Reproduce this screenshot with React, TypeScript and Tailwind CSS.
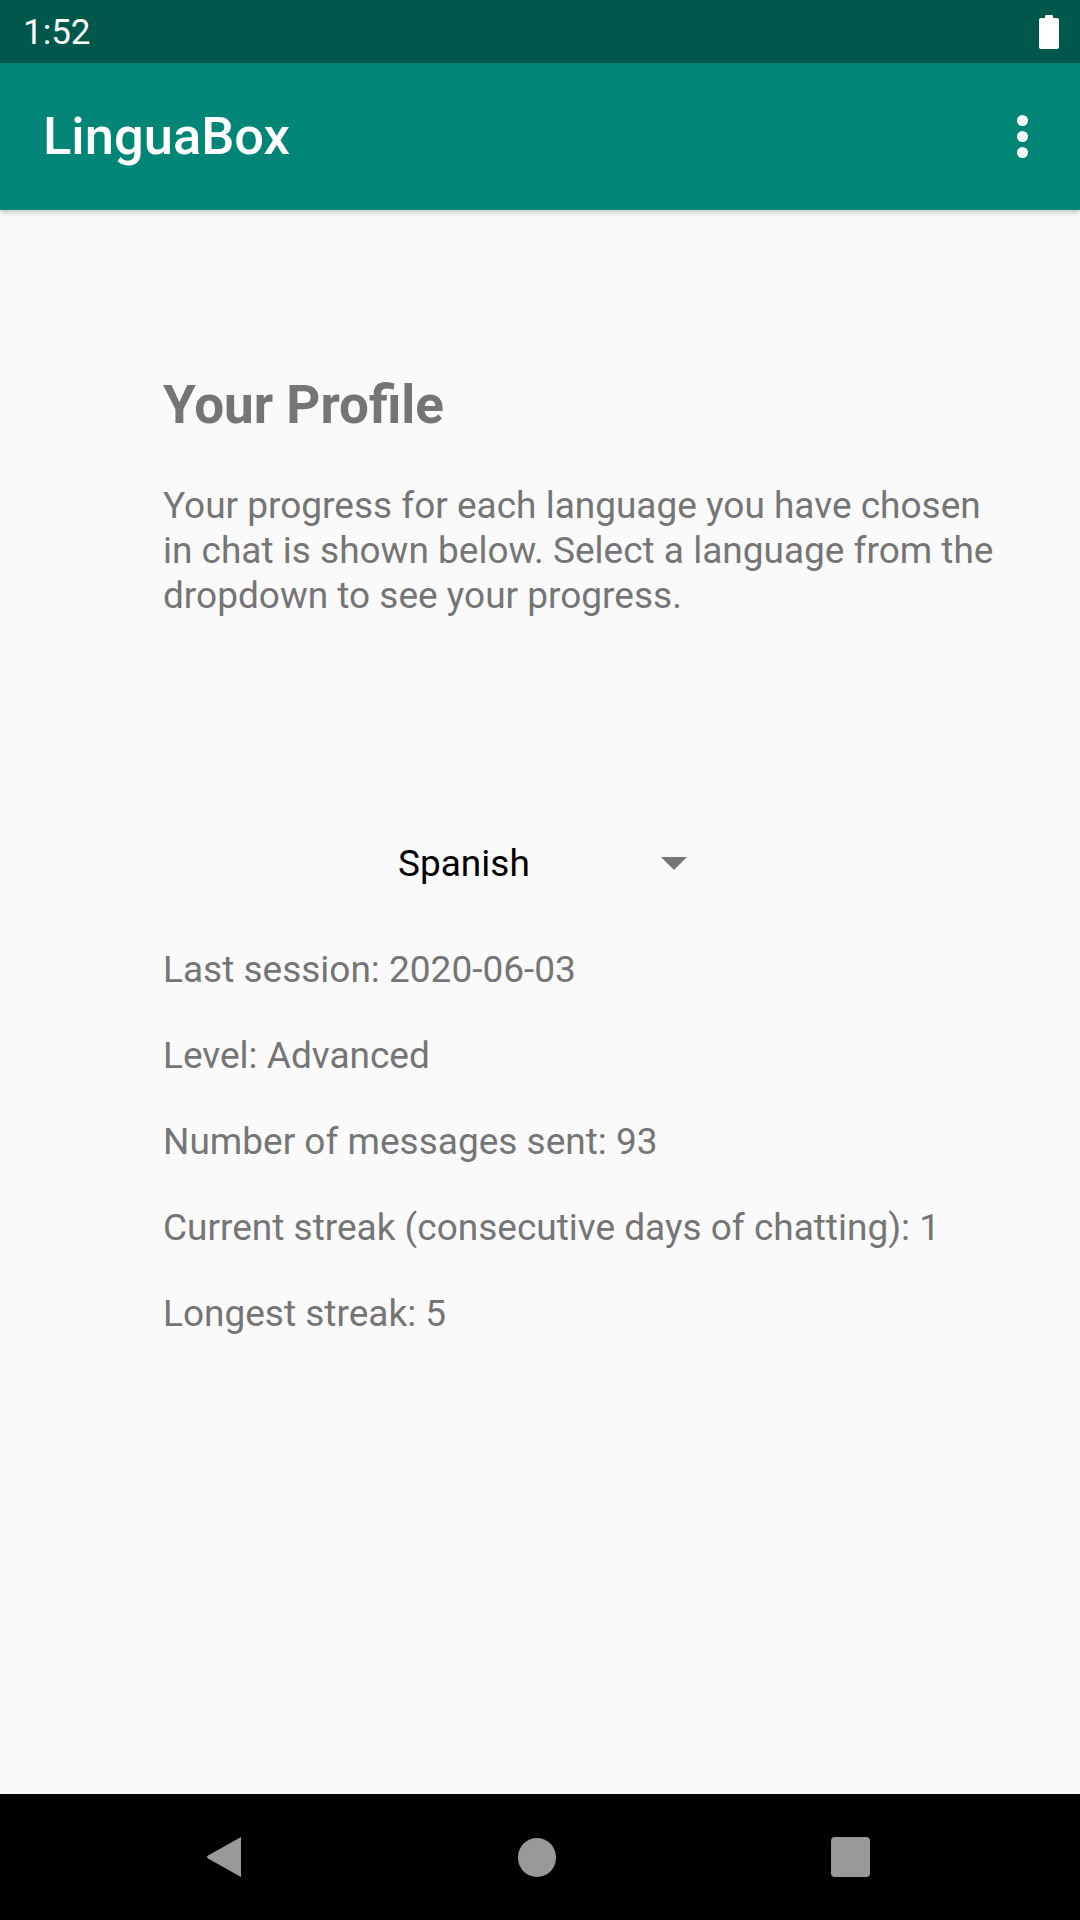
const stats: string[] = [
  "Last session: 2020-06-03",
  "Level: Advanced",
  "Number of messages sent: 93",
  "Current streak (consecutive days of chatting): 1",
  "Longest streak: 5",
];

function StatusBar() {
  return (
    <div className="h-[63px] bg-[#00574B] flex items-center justify-between pl-[23px] pr-[21px]">
      <span className="text-white text-[35px] leading-none pt-[2px]">1:52</span>
      {/* battery */}
      <svg width="20" height="34" viewBox="0 0 20 34" className="mt-[1px]">
        <rect x="6" y="0" width="8" height="4" rx="1" fill="#fff" />
        <rect x="0" y="3" width="20" height="31" rx="2" fill="#fff" />
      </svg>
    </div>
  );
}

function AppBar() {
  return (
    <div className="h-[147px] bg-[#008577] flex items-center justify-between pl-[43px] pr-[52px] shadow-[0_3px_5px_rgba(0,0,0,0.18)] relative z-10">
      <span className="text-white text-[52.5px] font-medium leading-none">LinguaBox</span>
      <div className="flex flex-col gap-[5px]">
        <div className="w-[11px] h-[11px] rounded-full bg-white"></div>
        <div className="w-[11px] h-[11px] rounded-full bg-white"></div>
        <div className="w-[11px] h-[11px] rounded-full bg-white"></div>
      </div>
    </div>
  );
}

function NavBar() {
  return (
    <div className="h-[126px] bg-black flex items-center justify-between pl-[164px] pr-[170px]">
      <div className="w-[120px] flex justify-center">
        <svg width="36" height="42" viewBox="0 0 36 42">
          <path d="M35 1 L35 41 L2 22.5 Q0 21 2 19.5 Z" fill="#999999" strokeLinejoin="round" />
        </svg>
      </div>
      <div className="w-[120px] flex justify-center">
        <div className="w-[38px] h-[39px] rounded-full bg-[#999999]"></div>
      </div>
      <div className="w-[120px] flex justify-center">
        <div className="w-[39px] h-[40px] rounded-[4px] bg-[#999999]"></div>
      </div>
    </div>
  );
}

export default function App() {
  return (
    <div
      className="w-[1080px] h-[1920px] flex flex-col bg-[#fafafa] overflow-hidden"
      style={{ fontFamily: "Roboto, 'Noto Sans', sans-serif" }}
    >
      <StatusBar />
      <AppBar />

      <main className="flex-1 flex flex-col pl-[163px] pr-[60px] pt-[164px]">
        <h1 className="text-[53px] font-bold leading-[62px] text-[#757575]">Your Profile</h1>

        <p className="mt-[47px] text-[37px] leading-[45px] text-[#757575] w-[850px]">
          Your progress for each language you have chosen in chat is shown below. Select a language from the dropdown to see your progress.
        </p>

        <div className="mt-[224px] flex justify-center pr-[103px]">
          <div className="w-[330px] flex items-center justify-between pl-[23px] pr-[18px]">
            <span className="text-[37px] leading-[43px] text-black">Spanish</span>
            <svg width="26" height="13" viewBox="0 0 26 13">
              <path d="M0 0 L26 0 L13 13 Z" fill="#757575" />
            </svg>
          </div>
        </div>

        <div className="mt-[63px] flex flex-col gap-[43px]">
          {stats.map((s) => (
            <p key={s} className="text-[37px] leading-[43px] text-[#757575] whitespace-nowrap">
              {s}
            </p>
          ))}
        </div>
      </main>

      <NavBar />
    </div>
  );
}
